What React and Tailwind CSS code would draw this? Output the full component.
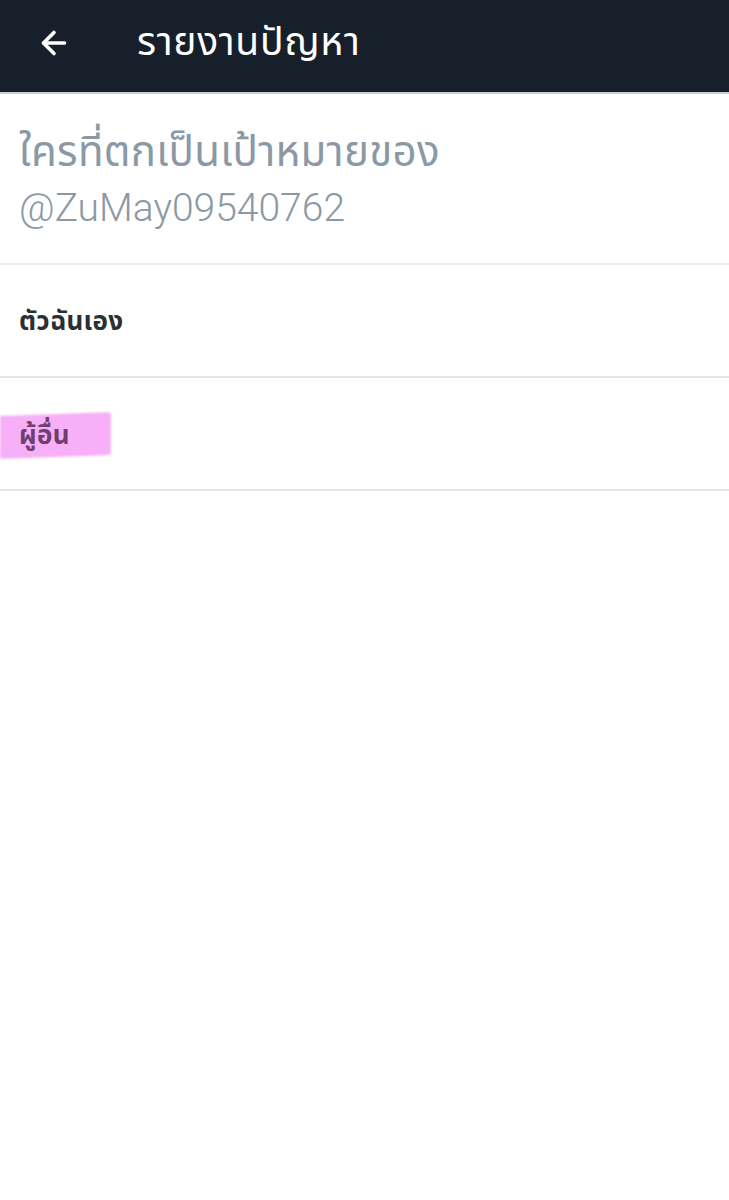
import { ArrowLeft } from 'lucide-react';

const font = { fontFamily: '"Noto Sans", "Noto Sans Thai", Roboto, sans-serif' };

const App = () => {
    return (
        <div className="min-h-screen bg-white" style={font}>
            <div className="h-[94px] bg-[#17202a] flex items-center border-b-2 border-[#c8ced3]">
                <div className="w-[137px] pl-[36px] flex items-center -mt-[6px]">
                    <ArrowLeft className="w-[36px] h-[36px] text-white" strokeWidth={2.4} />
                </div>
                <h1 className="text-white text-[39px] tracking-[0.7px] leading-none -mt-[14px]">รายงานปัญหา</h1>
            </div>

            <div className="px-[19px] pt-[30px] pb-[29px] border-b-2 border-[#e6ecf0]">
                <p className="text-[#8a99a6] text-[42px] tracking-[0.3px] leading-[52px]">ใครที่ตกเป็นเป้าหมายของ</p>
                <p className="text-[#8a99a6] text-[39px] leading-[52px] font-light mt-[6px]" style={{ fontFamily: 'Roboto, sans-serif' }}>
                    @ZuMay09540762
                </p>
            </div>

            <div className="h-[113px] flex items-center px-[19px] border-b-2 border-[#e1e8ed]">
                <span className="text-[#292f33] text-[26px] tracking-[0.3px] font-bold">ตัวฉันเอง</span>
            </div>

            <div className="h-[113px] flex items-center border-b-2 border-[#e1e8ed]">
                <div className="relative flex items-center h-[44px] w-[111px] pl-[19px] mt-[2px]">
                    <div className="absolute left-0 top-[1px] h-[43px] w-[111px] bg-[#f7b0f7] -skew-y-2 rounded-r-sm blur-[1px]" />
                    <span className="relative text-[#6e3f70] text-[26px] tracking-[0.3px] font-bold">ผู้อื่น</span>
                </div>
            </div>
        </div>
    );
};

export default App;
